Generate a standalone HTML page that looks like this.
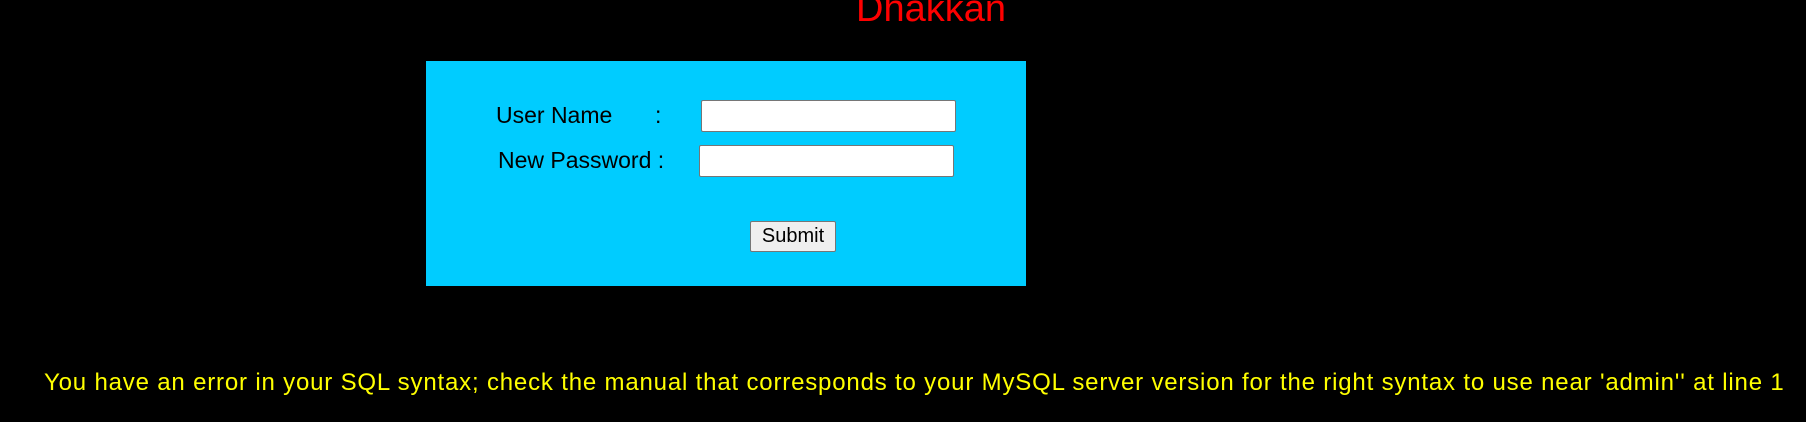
<!DOCTYPE html>
<html><head><meta charset="utf-8"><style>
body{margin:0;width:1806px;height:422px;background:#000;overflow:hidden;position:relative;font-family:"Liberation Sans",sans-serif}
.a{position:absolute;white-space:nowrap}
#t{left:856px;top:-12px;font-size:38px;color:#f00}
#box{left:426px;top:61px;width:600px;height:225px;background:#00ccff}
.l{font-size:23px;color:#000}
.in{position:absolute;background:#fff;border:1px solid #767676;border-radius:2px;box-sizing:border-box}
#btn{left:750px;top:221px;width:86px;height:31px;background:#efefef;border:1px solid #767676;border-radius:2px;box-sizing:border-box;font-size:20px;text-align:center;line-height:29px}
#e{left:44px;top:369px;font-size:24px;color:#ff0;letter-spacing:0.82px}
</style></head><body>
<div class="a" id="t">Dhakkan</div>
<div class="a" id="box"></div>
<div class="a l" style="left:496px;top:102px">User Name</div>
<div class="a l" style="left:655px;top:102px">:</div>
<div class="in" style="left:701px;top:100px;width:255px;height:32px"></div>
<div class="a l" style="left:498px;top:147px">New Password :</div>
<div class="in" style="left:699px;top:145px;width:255px;height:32px"></div>
<div class="a" id="btn">Submit</div>
<div class="a" id="e">You have an error in your SQL syntax; check the manual that corresponds to your MySQL server version for the right syntax to use near 'admin'' at line 1</div>
</body></html>
